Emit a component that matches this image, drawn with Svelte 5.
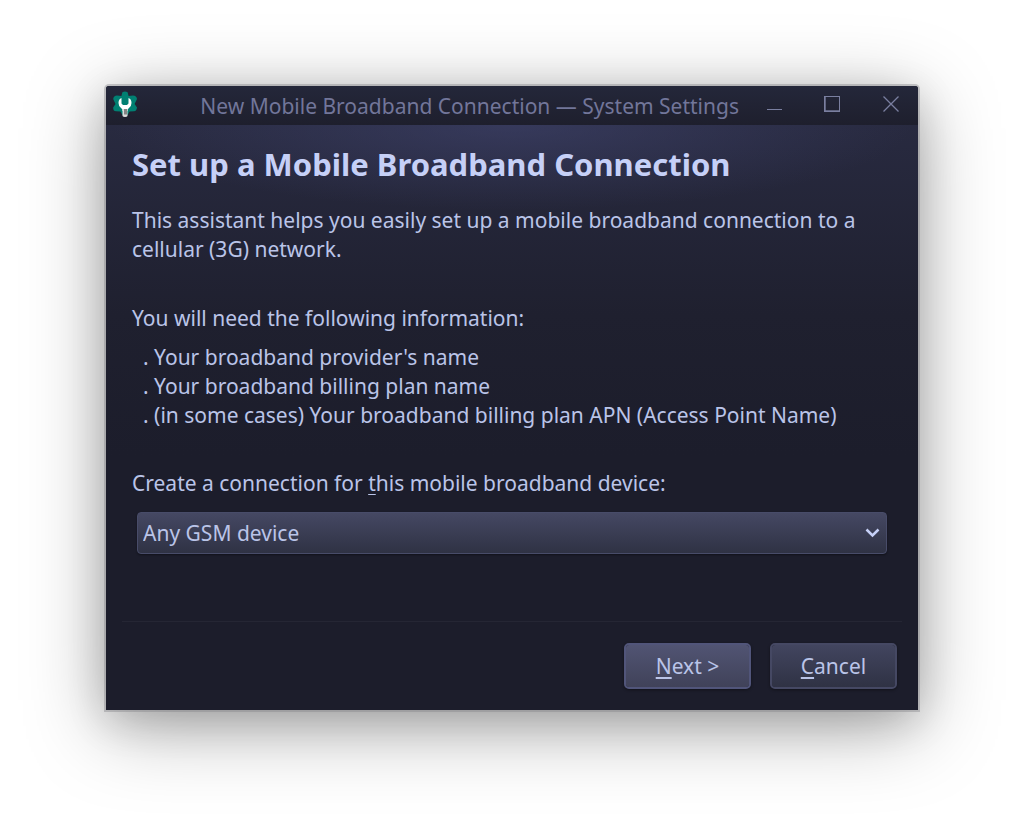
<script>
  const requirements = [
    "Your broadband provider's name",
    'Your broadband billing plan name',
    '(in some cases) Your broadband billing plan APN (Access Point Name)'
  ];
  const devices = ['Any GSM device', 'Any CDMA device'];
  let device = $state(devices[0]);
</script>

<div class="desktop">
  <section class="window" aria-labelledby="window-title">
    <header class="titlebar">
      <svg class="app-icon" width="26" height="26" viewBox="0 0 26 26" aria-hidden="true">
        <path
          fill="#018072"
          d="M10.4 1.2Q13 -.4 15.6 1.2L16.6 5L21 4.4Q24.600 4.600 25 8L22.600 13L25 16.500Q24.600 20 22 20.300L17.500 20.500L15.600 24H10.400L8.500 20.500L4 20.300Q1 20 1.200 16.500L3.500 13L1.200 8Q1.600 4.600 5 4.400L9.400 5Z"
        />
        <path
          fill="#fff"
          d="M9.500 7Q6.500 8 6.500 12Q6.500 15 9 17L10.500 18.500V20H15.500V18.500L17 17Q19.500 15 19.500 12Q19.500 8 16.500 7V12.500L15 14H11L9.500 12.500Z"
        />
        <path fill="#dcdcdc" d="M10.500 18H15.500V25Q15 26 13 26Q11 26 10.500 25Z" />
        <path fill="#858585" d="M12 18H15V23.500H12Z" />
      </svg>
      <h1 id="window-title">New Mobile Broadband Connection — System Settings</h1>
      <div class="window-buttons">
        <button type="button" aria-label="Minimize">
          <svg width="18" height="18" viewBox="0 0 18 18"><path d="M3 14.500H18" /></svg>
        </button>
        <button type="button" aria-label="Maximize">
          <svg width="18" height="18" viewBox="0 0 18 18">
            <path d="M1.500 1V17M1 1.500H17M16.500 1V17M1 16.500H17" />
            <path d="M2.500 1V17M1 15.500H17" opacity=".7" />
          </svg>
        </button>
        <button type="button" aria-label="Close">
          <svg width="18" height="18" viewBox="0 0 18 18">
            <path stroke-width="1.300" d="M1.500 1.500L16.500 16.500M16.500 1.500L1.500 16.500" />
          </svg>
        </button>
      </div>
    </header>

    <form class="content" onsubmit={(e) => e.preventDefault()}>
      <div class="page">
        <h2>Set up a Mobile Broadband Connection</h2>
        <p class="intro">
          This assistant helps you easily set up a mobile broadband connection to a cellular (3G) network.
        </p>
        <p>You will need the following information:</p>
        <ul>
          {#each requirements as item}
            <li>. {item}</li>
          {/each}
        </ul>
        <label for="device">Create a connection for <u>t</u>his mobile broadband device:</label>
        <div class="select">
          <select id="device" bind:value={device}>
            {#each devices as name}
              <option value={name}>{name}</option>
            {/each}
          </select>
          <svg width="16" height="12" viewBox="0 0 16 12" aria-hidden="true">
            <path d="M1.500 2.500L7.500 8.500L13.500 2.500" />
          </svg>
        </div>
      </div>
      <footer>
        <button class="action primary" type="submit"><span><u>N</u>ext &gt;</span></button>
        <button class="action" type="button"><span><u>C</u>ancel</span></button>
      </footer>
    </form>
  </section>
</div>

<style>
  :global(body) {
    margin: 0;
    background: #fff;
  }

  .desktop {
    box-sizing: border-box;
    min-height: 100vh;
    padding: 86px 106px 125px;
    display: flex;
    overflow: hidden;
  }

  .window {
    flex: 1;
    min-width: 0;
    display: flex;
    flex-direction: column;
    border-radius: 3px 3px 0 0;
    background: #1c1d2b;
    color: #bac4e8;
    font: 21px/29px 'Noto Sans', sans-serif;
    box-shadow:
      0 0 0 2px rgba(130, 130, 134, 0.4),
      0 16px 80px rgba(0, 0, 0, 0.34),
      0 10px 40px rgba(0, 0, 0, 0.16);
  }

  .titlebar {
    display: flex;
    align-items: center;
    height: 39px;
    padding: 0 18px 0 6px;
    border-radius: 3px 3px 0 0;
    background: linear-gradient(#24273a, #1e1f2d);
    color: #72769a;
  }

  .app-icon {
    margin-bottom: 4px;
  }

  h1 {
    flex: 1;
    margin: 2px 0 0;
    font-size: 21px;
    font-weight: 400;
    text-align: right;
    white-space: nowrap;
  }

  .window-buttons {
    display: flex;
    gap: 41px;
    margin: 0 0 3px 25px;
  }

  .window-buttons button {
    display: flex;
    padding: 0;
    border: 0;
    background: none;
  }

  .window-buttons path {
    fill: none;
    stroke: #7a7fa0;
  }

  .content {
    flex: 1;
    display: flex;
    flex-direction: column;
    background:
      radial-gradient(ellipse 400px 85px at 50% 0, rgba(64, 68, 110, 0.6), transparent),
      linear-gradient(#282a40, #1f202f 190px, #1c1d2b 330px);
  }

  .page {
    flex: 1;
    margin: 0 16px;
    padding: 18px 10px 0;
    border-bottom: 1px solid #252634;
  }

  h2 {
    margin: 0;
    color: #c6d0f7;
    font-size: 31px;
    line-height: 42px;
    font-weight: 700;
  }

  p {
    margin: 0;
  }

  .intro {
    margin: 21px 0 40px;
  }

  ul {
    margin: 10px 0 39px;
    padding: 0 0 0 11px;
    list-style: none;
  }

  label {
    display: block;
  }

  u {
    text-decoration: underline 1px;
    text-underline-offset: 3px;
    text-decoration-skip-ink: none;
  }

  .select {
    display: grid;
    align-items: center;
    margin: 14px 5px 0;
  }

  .select select {
    grid-area: 1 / 1;
    box-sizing: border-box;
    width: 100%;
    height: 42px;
    padding: 0 30px 0 5px;
    appearance: none;
    border: 1px solid #484c69;
    border-radius: 4px;
    background: linear-gradient(#454863, #2f3244);
    box-shadow: 0 1px 2px rgba(0, 0, 0, 0.4);
    color: inherit;
    font: inherit;
  }

  .select svg {
    grid-area: 1 / 1;
    justify-self: end;
    margin-right: 6px;
    pointer-events: none;
  }

  .select path {
    fill: none;
    stroke: #c6d0f7;
    stroke-width: 2.5;
  }

  footer {
    display: flex;
    justify-content: flex-end;
    gap: 19px;
    padding: 21px;
  }

  .action {
    box-sizing: border-box;
    width: 127px;
    height: 46px;
    padding: 0;
    border: 2px solid #454863;
    border-radius: 5px;
    background: linear-gradient(#42455f, #2f3244) padding-box;
    box-shadow: 0 1px 3px rgba(0, 0, 0, 0.4);
    color: inherit;
    font: inherit;
  }

  .action.primary {
    border-color: #51557a;
    background: linear-gradient(#515473, #404259) padding-box;
  }

  .action u {
    text-decoration-thickness: 2px;
  }
</style>
